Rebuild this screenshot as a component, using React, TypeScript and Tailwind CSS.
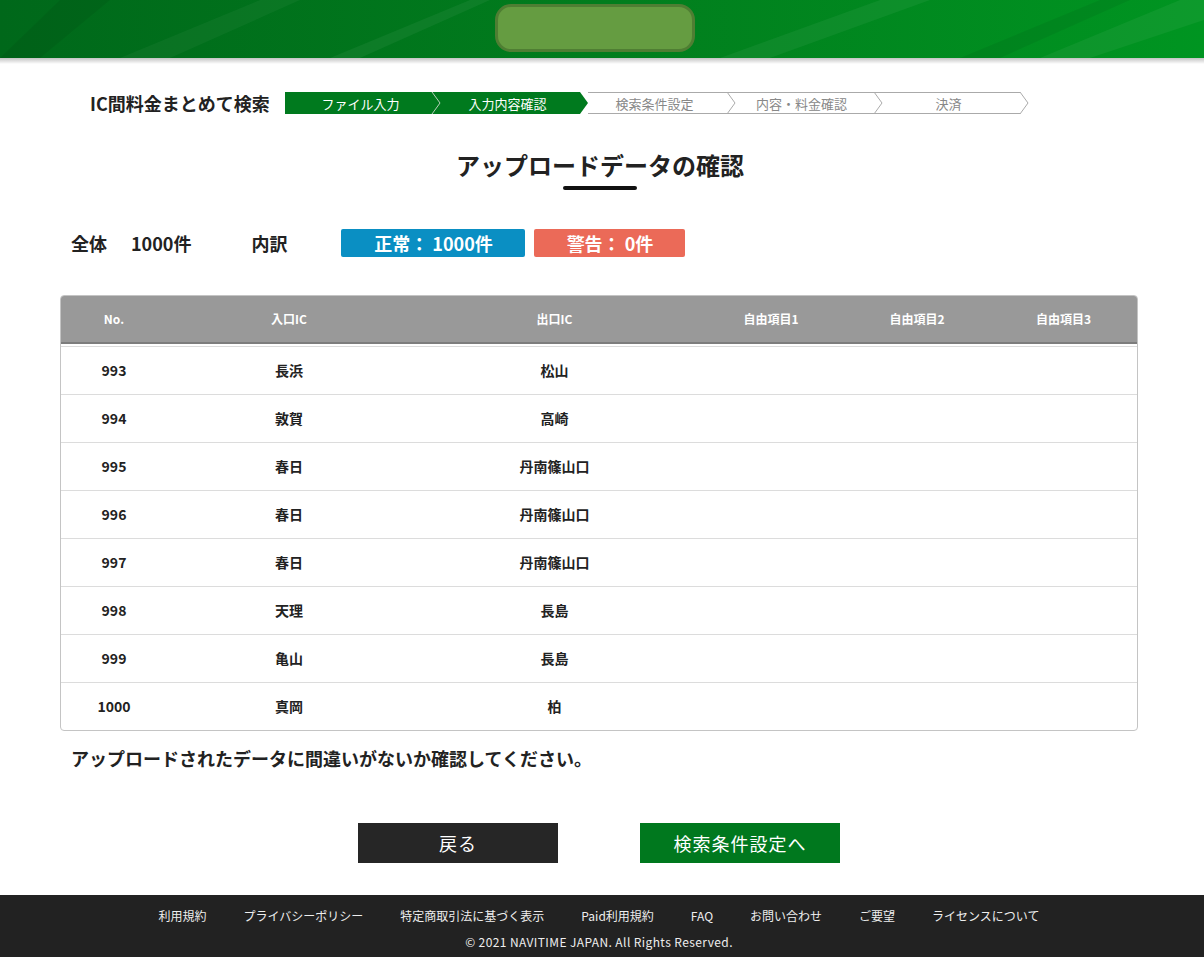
import React from "react";

const steps = [
  { label: "ファイル入力", active: true },
  { label: "入力内容確認", active: true },
  { label: "検索条件設定", active: false },
  { label: "内容・料金確認", active: false },
  { label: "決済", active: false },
];

const rows = [
  ["993", "長浜", "松山"],
  ["994", "敦賀", "高崎"],
  ["995", "春日", "丹南篠山口"],
  ["996", "春日", "丹南篠山口"],
  ["997", "春日", "丹南篠山口"],
  ["998", "天理", "長島"],
  ["999", "亀山", "長島"],
  ["1000", "真岡", "柏"],
];

const footerLinks = [
  "利用規約",
  "プライバシーポリシー",
  "特定商取引法に基づく表示",
  "Paid利用規約",
  "FAQ",
  "お問い合わせ",
  "ご要望",
  "ライセンスについて",
];

const cols = "grid grid-cols-[106px_244px_287px_146px_146px_147px]";

const StepBar = () => {
  return (
    <div className="relative h-[22px] w-[745px]">
      {/* arrow shapes */}
      <svg className="absolute inset-0" width="745" height="22" viewBox="0 0 745 22">
        <polygon points="0,0 295,0 303,11 295,22 0,22" fill="#007a1e" />
        <polyline points="147,0 155,11 147,22" fill="none" stroke="#b9cfbb" strokeWidth="1" />
        <line x1="303" y1="0.5" x2="735" y2="0.5" stroke="#aaaaaa" />
        <line x1="303" y1="21.5" x2="735" y2="21.5" stroke="#aaaaaa" />
        <polyline points="442,0 450,11 442,22" fill="none" stroke="#aaaaaa" />
        <polyline points="589,0 597,11 589,22" fill="none" stroke="#aaaaaa" />
        <polyline points="735,0 743,11 735,22" fill="none" stroke="#aaaaaa" />
      </svg>
      <div className="relative flex h-full">
        {steps.map((s) => (
          <div
            key={s.label}
            className={`w-[147px] flex items-center justify-center pl-[4px] text-[13px] leading-none ${
              s.active ? "text-white" : "text-[#888]"
            }`}
          >
            {s.label}
          </div>
        ))}
      </div>
    </div>
  );
};

const Header = () => {
  return (
    <header className="relative h-[58px] bg-gradient-to-r from-[#00681a] via-[#017d1d] to-[#009521] overflow-hidden">
      <svg className="absolute inset-0" width="1204" height="58" viewBox="0 0 1204 58">
        <polygon points="120,58 260,0 300,0 170,58" fill="#ffffff" opacity="0.04" />
        <polygon points="330,58 470,0 490,0 360,58" fill="#ffffff" opacity="0.05" />
        <polygon points="720,58 880,0 930,0 770,58" fill="#ffffff" opacity="0.05" />
        <polygon points="960,58 1100,0 1130,0 1000,58" fill="#000000" opacity="0.06" />
        <polygon points="1040,58 1180,0 1204,0 1204,20 1090,58" fill="#ffffff" opacity="0.05" />
        <polygon points="0,58 60,0 110,0 40,58" fill="#000000" opacity="0.06" />
      </svg>
      <div className="relative flex justify-center pt-[4px] pr-[14px]">
        <div className="w-[200px] h-[48px] rounded-[16px] bg-[#659c41] border-[3px] border-[#4f7e33]" />
      </div>
    </header>
  );
};

export default function App() {
  return (
    <div className="min-h-screen bg-white font-['Noto_Sans_CJK_JP','Noto_Sans',sans-serif] text-[#222]">
      <Header />
      <div className="h-[6px] bg-gradient-to-b from-[#c4c4c4] to-white" />

      <main className="w-[1078px] ml-[60px]">
        {/* breadcrumb */}
        <div className="flex items-center mt-[28px]">
          <div className="w-[225px] pl-[30px] text-[18px] font-bold leading-[22px] text-[#222] whitespace-nowrap">
            IC間料金まとめて検索
          </div>
          <StepBar />
        </div>

        {/* heading */}
        <div className="flex flex-col items-center mt-[33px] ml-[2px]">
          <h1 className="text-[24px] font-bold leading-[36px] text-[#222]">
            アップロードデータの確認
          </h1>
          <div className="mt-[3px] h-[4px] w-[74px] rounded-full bg-[#111]" />
        </div>

        {/* summary */}
        <div className="flex items-center mt-[39px] h-[28px] text-[18px] font-bold">
          <span className="ml-[11px]">全体</span>
          <span className="ml-[24px]">1000件</span>
          <span className="ml-[60px]">内訳</span>
          <span className="ml-[54px] w-[184px] h-[28px] flex items-center justify-center rounded-[2px] bg-[#0a8fc3] text-white whitespace-pre">
            正常： 1000件
          </span>
          <span className="ml-[9px] w-[151px] h-[28px] flex items-center justify-center rounded-[2px] bg-[#eb6a58] text-white whitespace-pre">
            警告： 0件
          </span>
        </div>

        {/* table */}
        <div className="mt-[38px] border border-[#c4c4c4] rounded-[4px] overflow-hidden">
          <div className={`${cols} h-[48px] bg-[#999] border-b-2 border-[#7d7d7d] text-white text-[12px] font-bold items-center text-center`}>
            <div>No.</div>
            <div>入口IC</div>
            <div>出口IC</div>
            <div>自由項目1</div>
            <div>自由項目2</div>
            <div>自由項目3</div>
          </div>
          <div className="pt-[2px]">
            {rows.map((r) => (
              <div
                key={r[0]}
                className={`${cols} h-[48px] border-t border-[#dcdcdc] items-center text-center text-[14px] font-bold text-[#222]`}
              >
                <div>{r[0]}</div>
                <div>{r[1]}</div>
                <div>{r[2]}</div>
                <div />
                <div />
                <div />
              </div>
            ))}
          </div>
        </div>

        <p className="mt-[14px] ml-[11px] text-[18px] font-bold leading-[26px] text-[#222]">
          アップロードされたデータに間違いがないか確認してください。
        </p>

        {/* buttons */}
        <div className="flex justify-center gap-[82px] mt-[52px]">
          <button className="w-[200px] h-[40px] bg-[#262626] text-white text-[18px] tracking-[1px]">
            戻る
          </button>
          <button className="w-[200px] h-[40px] bg-[#00781e] text-white text-[18px] tracking-[1px]">
            検索条件設定へ
          </button>
        </div>
      </main>

      <footer className="mt-[32px] h-[62px] bg-[#222] pt-[12px] text-[12px] leading-[18px] text-[#eee]">
        <div className="flex justify-center gap-[37px] ml-[-6px]">
          {footerLinks.map((l) => (
            <a key={l} href="#">
              {l}
            </a>
          ))}
        </div>
        <div className="mt-[8px] ml-[-6px] text-center tracking-[0.4px]">© 2021 NAVITIME JAPAN. All Rights Reserved.</div>
      </footer>
    </div>
  );
}
